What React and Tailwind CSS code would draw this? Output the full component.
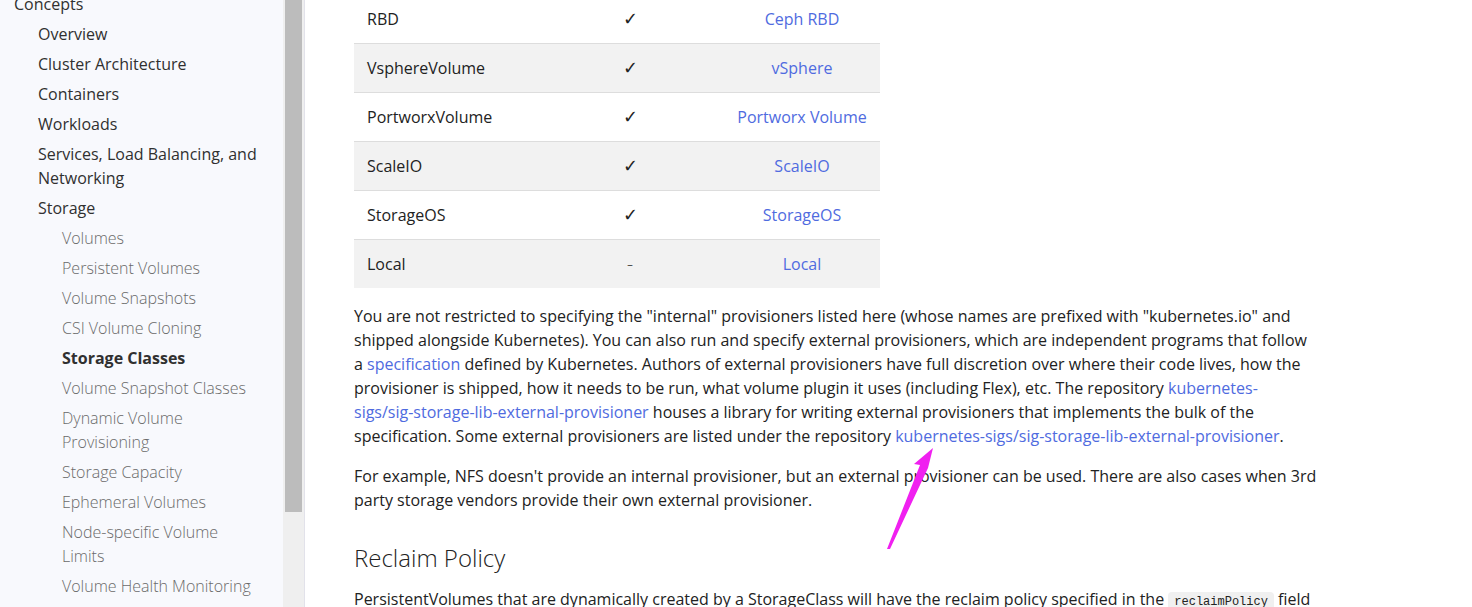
import React from 'react';

const navTop = [
  { label: 'Overview' },
  { label: 'Cluster Architecture' },
  { label: 'Containers' },
  { label: 'Workloads' },
  { label: 'Services, Load Balancing, and Networking' },
  { label: 'Storage' },
];

const storageItems = [
  { label: 'Volumes' },
  { label: 'Persistent Volumes' },
  { label: 'Volume Snapshots' },
  { label: 'CSI Volume Cloning' },
  { label: 'Storage Classes', active: true },
  { label: 'Volume Snapshot Classes' },
  { label: 'Dynamic Volume Provisioning' },
  { label: 'Storage Capacity' },
  { label: 'Ephemeral Volumes' },
  { label: 'Node-specific Volume Limits' },
  { label: 'Volume Health Monitoring' },
];

const rows = [
  { name: 'RBD', internal: '✓', link: 'Ceph RBD' },
  { name: 'VsphereVolume', internal: '✓', link: 'vSphere' },
  { name: 'PortworxVolume', internal: '✓', link: 'Portworx Volume' },
  { name: 'ScaleIO', internal: '✓', link: 'ScaleIO' },
  { name: 'StorageOS', internal: '✓', link: 'StorageOS' },
  { name: 'Local', internal: '-', link: 'Local' },
];

const Link = ({ children }) => (
  <a href="#" className="text-[#4f6be0]">{children}</a>
);

const Sidebar = () => (
  <aside className="w-[283px] shrink-0 bg-[#f8f9fd] overflow-hidden">
    <div className="-mt-[8px] pl-[14px] pr-4">
      <div className="text-[16px] leading-6 text-[#303030]">Concepts</div>
      <ul className="pl-6">
        {navTop.map((item) => (
          <li key={item.label} className="mt-[6px] text-[16px] leading-6 text-[#303030] w-[222px]">
            {item.label}
          </li>
        ))}
        <ul className="pl-6">
          {storageItems.map((item) => (
            <li
              key={item.label}
              className={
                item.active
                  ? 'mt-[6px] text-[16px] leading-6 font-bold text-[#303030] w-[196px]'
                  : 'mt-[6px] text-[16px] leading-6 font-light text-[#6a6a6a] w-[196px]'
              }
            >
              {item.label}
            </li>
          ))}
        </ul>
      </ul>
    </div>
  </aside>
);

const Scrollbar = () => (
  <div className="w-[22px] shrink-0 flex">
    <div className="w-[21px] bg-[#efefef] pl-[2px] pr-[2px]">
      <div className="h-[512px] bg-[#bcbcbc]"></div>
    </div>
    <div className="w-px bg-[#e2e2ea]"></div>
  </div>
);

export default function App() {
  return (
    <div
      className="relative flex h-[607px] w-[1472px] overflow-hidden bg-white"
      style={{ fontFamily: '"Open Sans", "DejaVu Sans", sans-serif' }}
    >
      <Sidebar />
      <Scrollbar />

      <main className="flex-1 pl-[49px] text-[16px] leading-6 text-[#222]">
        {/* Provisioner table */}
        <table className="-mt-[5px] w-[526px] border-collapse">
          <colgroup>
            <col className="w-[182px]" />
            <col className="w-[188px]" />
            <col className="w-[156px]" />
          </colgroup>
          <tbody>
            {rows.map((row, i) => (
              <tr
                key={row.name}
                className={(i % 2 === 1 ? 'bg-[#f2f2f2] ' : 'bg-white ') + 'border-b border-[#dddddd] last:border-b-0'}
              >
                <td className="px-[13px] py-3 text-left">{row.name}</td>
                <td className="px-[13px] py-3 text-center leading-6">
                  <span className="font-light" style={{ fontFamily: '"DejaVu Sans", sans-serif', fontSize: 18 }}>{row.internal}</span>
                </td>
                <td className="px-[13px] py-3 text-center">
                  <Link>{row.link}</Link>
                </td>
              </tr>
            ))}
          </tbody>
        </table>

        <p className="mt-4 w-[963px]">
          You are not restricted to specifying the "internal" provisioners listed here (whose names are prefixed with "kubernetes.io" and
          shipped alongside Kubernetes). You can also run and specify external provisioners, which are independent programs that follow
          a <Link>specification</Link> defined by Kubernetes. Authors of external provisioners have full discretion over where their code lives, how the
          provisioner is shipped, how it needs to be run, what volume plugin it uses (including Flex), etc. The repository{' '}
          <Link>kubernetes-sigs/sig-storage-lib-external-provisioner</Link> houses a library for writing external provisioners that implements the bulk of the
          specification. Some external provisioners are listed under the repository{' '}
          <Link>kubernetes-sigs/sig-storage-lib-external-provisioner</Link>.
        </p>

        <p className="mt-4 w-[963px]">
          For example, NFS doesn't provide an internal provisioner, but an external provisioner can be used. There are also cases when 3rd
          party storage vendors provide their own external provisioner.
        </p>

        <h2 className="mt-[30px] text-[24px] leading-8 font-light text-[#222]">Reclaim Policy</h2>

        <p className="mt-[13px] w-[963px]">
          PersistentVolumes that are dynamically created by a StorageClass will have the reclaim policy specified in the{' '}
          <code
            className="rounded bg-[#f0f0f0] px-[6px] py-[3px] text-[12px] text-[#222]"
            style={{ fontFamily: '"Liberation Mono", monospace' }}
          >
            reclaimPolicy
          </code>{' '}
          field of the class, which can be either Delete or Retain.
        </p>
      </main>

      {/* annotation arrow */}
      <svg className="absolute left-0 top-0 pointer-events-none" width="1472" height="607">
        <polygon points="933,448 914,464 920,465 887,549 890,549 928,468" fill="#f020f0" />
      </svg>
    </div>
  );
}
